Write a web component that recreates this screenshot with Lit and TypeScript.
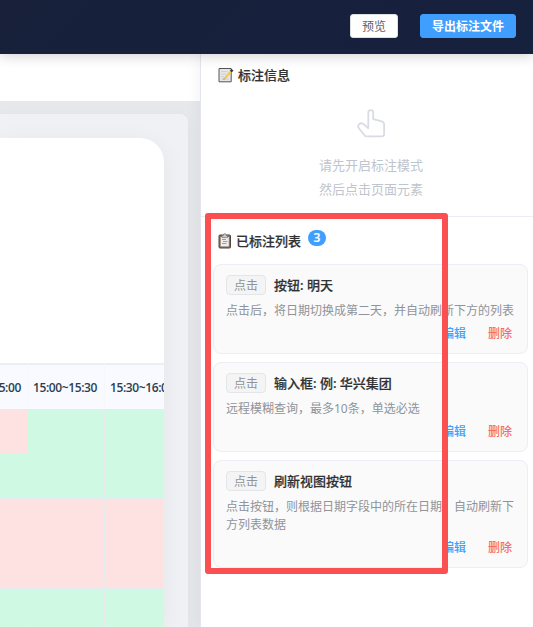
import { LitElement, html, css, svg } from "lit";
import { customElement } from "lit/decorators.js";
import { classMap } from "lit/directives/class-map.js";

interface Note {
  title: string;
  text: string;
}

const notes: Note[] = [
  { title: "按钮: 明天", text: "点击后，将日期切换成第二天，并自动刷新下方的列表" },
  { title: "输入框: 例: 华兴集团", text: "远程模糊查询，最多10条，单选必选" },
  { title: "刷新视图按钮", text: "点击按钮，则根据日期字段中的所在日期，自动刷新下方列表数据" },
];

// true marks a booked half-hour slot
const slots: boolean[][] = [
  [true, false, false],
  [false, false, false],
  [true, true, true],
  [true, true, true],
  [false, false, false],
];

const memoIcon = svg`
  <path d="M1 1.500h12.200v13.300H1z" fill="#e6e6e6" stroke="#555" stroke-width="1"/>
  <path d="M3 4.500h6.500M3 7h5M3 9.500h3M3 12h8" stroke="#cfcfcf" stroke-width=".9"/>
  <path d="M5.800 11 12 3.700l1.600 1.400-6.200 7.200z" fill="#f7c548"/>
  <path d="m5 13 .8-2 1.600 1.300z" fill="#b39a78"/>
  <path d="m11.900 3.700 1.600-1.700 2 1.500-1.600 1.800z" fill="#333"/>
`;

const clipIcon = svg`
  <rect x="1" y="2" width="11.500" height="13" rx="1" fill="#8a7464" stroke="#51443c" stroke-width="1"/>
  <path d="M2.700 4h8.100v9.400H2.700z" fill="#ededed"/>
  <path d="M4 2.400h1.300L5.900.8h1.700l.6 1.600h1.300v2.200H4z" fill="#c9c9c9" stroke="#666" stroke-width=".6"/>
  <path d="M4 6.500h4M5 8.500h4.500M4 10.500h4.500" stroke="#888" stroke-width=".8"/>
`;

const handIcon = svg`
  <path d="M368.300 128.200V112.500c0-3.200 4.900-3.200 4.900 0v6.600l8.400 2.300c1.700.5 2.500 1.400 2.500 3.100v9.700c0 1.400-.8 2.100-2.100 2.100h-15.300c-1 0-1.600-.3-2.200-1l-5.700-7.200c-1-1.200-.8-3 .6-4 1.500-1.100 3.500-.8 4.800.5z"
    fill="none" stroke="#d9dce3" stroke-width="1.800" stroke-linejoin="round"/>
`;

@customElement("app-root")
export class AppRoot extends LitElement {
  static styles = css`
    :host {
      display: flex;
      flex-direction: column;
      position: relative;
      width: 533px;
      height: 627px;
      overflow: hidden;
      background: #fff;
      color: #303133;
      font: 12px/18px "Noto Sans", "Noto Sans CJK SC", sans-serif;
    }
    * { box-sizing: border-box; }
    svg { display: block; flex: none; }
    .top {
      flex: none;
      height: 54px;
      display: flex;
      justify-content: flex-end;
      align-items: center;
      gap: 22px;
      padding: 0 17px 2px 0;
      background: linear-gradient(135deg, #18203a, #16213e);
      box-shadow: 0 2px 12px rgba(0, 0, 0, 0.18);
      position: relative;
      z-index: 2;
    }
    .btn {
      height: 24px;
      width: 48px;
      padding: 0;
      border: 1px solid #dcdfe6;
      border-radius: 3px;
      background: #fff;
      color: #606266;
      font: 12px/20px "Noto Sans CJK SC", sans-serif;
      text-align: center;
    }
    .primary {
      width: 96px;
      border-color: #409eff;
      background: #409eff;
      color: #fff;
      font-weight: 700;
    }
    .main { flex: 1; min-height: 0; display: flex; }
    .left {
      width: 200px;
      flex: none;
      display: flex;
      flex-direction: column;
      background: #e6e8eb;
    }
    .bar { flex: none; height: 47px; background: #fff; }
    .stage { flex: 1; min-height: 0; padding: 13px 12px 0 0; overflow: hidden; }
    .frame {
      height: 100%;
      padding: 24px 24px 0 0;
      border-radius: 0 8px 0 0;
      background: #eff1f5;
      box-shadow: 0 4px 20px rgba(0, 0, 0, 0.04);
      overflow: hidden;
    }
    .page {
      height: 100%;
      padding-top: 225px;
      border-radius: 0 24px 0 0;
      background: #fff;
      box-shadow: 0 4px 24px rgba(0, 0, 0, 0.05);
      overflow: hidden;
    }
    .grid {
      display: grid;
      grid-template-columns: 28px 77px 77px;
      grid-template-rows: 46px;
      grid-auto-rows: 45px;
      width: 182px;
    }
    .hour {
      display: flex;
      align-items: center;
      justify-content: center;
      padding: 1px 2px 0 0;
      border-top: 2px solid #ebeef3;
      border-right: 1px solid #f5f7fb;
      background: #f8faff;
      color: #2c3e50;
      font: 600 12px/18px "Open Sans", sans-serif;
      letter-spacing: -0.38px;
      white-space: nowrap;
    }
    .hour.cut { justify-content: flex-end; padding-right: 6px; }
    .slot {
      border-right: 1px solid #e8ebf0;
      border-bottom: 1px solid #e5ebee;
      background: #d0f9e3;
    }
    .slot.busy { background: #fee2e2; }
    .slot.open { border-bottom: 0; }
    .side {
      flex: 1;
      min-width: 0;
      border-left: 1px solid #e4e6ef;
      background: #fff;
      box-shadow: -2px 0 12px rgba(0, 0, 0, 0.05);
      position: relative;
    }
    .info { height: 163px; border-bottom: 1px solid #ebeef5; padding: 11px 0 0 17px; }
    .heading {
      display: flex;
      align-items: center;
      height: 20px;
      font: 500 13px/20px "Noto Sans CJK SC", sans-serif;
      color: #303133;
      -webkit-text-stroke: 0.2px;
    }
    .memo { margin-right: 4px; }
    .clip { margin-right: 4px; }
    .empty {
      width: 306px;
      display: flex;
      flex-direction: column;
      align-items: center;
      padding-top: 24px;
      color: #c0c4cc;
      font: 13px/24px "Noto Sans CJK SC", sans-serif;
      text-align: center;
    }
    .hand { margin-bottom: 14px; }
    .list { padding: 14px 5px 0 12px; }
    .list .heading { padding-left: 5px; margin-bottom: 13px; }
    .count {
      width: 18px;
      height: 16px;
      margin: 0 0 6px 7px;
      border-radius: 8px;
      background: #409eff;
      color: #fff;
      font: 600 12px/16px "Open Sans", sans-serif;
      text-align: center;
    }
    .cards { display: flex; flex-direction: column; gap: 8px; }
    .card {
      display: flex;
      flex-direction: column;
      padding: 10px 12px;
      border: 1px solid #ebedf7;
      border-radius: 8px;
      background: #fafafa;
    }
    .row { display: flex; align-items: center; gap: 8px; height: 20px; }
    .tag {
      width: 40px;
      height: 20px;
      border: 1px solid #e4e5e8;
      border-radius: 4px;
      background: #f4f4f5;
      color: #909399;
      font: 12px/18px "Noto Sans CJK SC", sans-serif;
      text-align: center;
    }
    .name {
      font: 500 13px/20px "Noto Sans", "Noto Sans CJK SC", sans-serif;
      -webkit-text-stroke: 0.2px;
    }
    .text {
      margin-top: 7px;
      color: #909399;
      font: 12px/18px "Noto Sans", "Noto Sans CJK SC", sans-serif;
    }
    .acts {
      display: flex;
      justify-content: flex-end;
      gap: 22px;
      height: 20px;
      margin-top: 3px;
      padding-right: 3px;
      font: 500 12px/20px "Noto Sans CJK SC", sans-serif;
    }
    .edit { color: #409eff; }
    .del { color: #f56c6c; }
    .mark {
      position: absolute;
      left: 205px;
      top: 213px;
      width: 243px;
      height: 361px;
      border: 6px solid #fb5052;
      border-radius: 3px;
      z-index: 3;
    }
  `;

  render() {
    return html`
      <header class="top">
        <button class="btn">预览</button>
        <button class="btn primary">导出标注文件</button>
      </header>
      <div class="main">
        <section class="left">
          <div class="bar"></div>
          <div class="stage">
            <div class="frame">
              <div class="page">
                <div class="grid">
                  <div class="hour cut">15:00</div>
                  <div class="hour">15:00~15:30</div>
                  <div class="hour">15:30~16:00</div>
                  ${slots.map((row, r) =>
                    row.map((busy, c) => html`<div class=${classMap({ slot: true, busy, open: r === 0 && c === 0 })}></div>`)
                  )}
                </div>
              </div>
            </div>
          </div>
        </section>
        <aside class="side">
          <section class="info">
            <div class="heading">
              <svg class="memo" width="16" height="16" viewBox="0 0 16 16">${memoIcon}</svg>标注信息
            </div>
            <div class="empty">
              <svg class="hand" width="30" height="30" viewBox="356 109 30 30">${handIcon}</svg>
              <div>请先开启标注模式</div>
              <div>然后点击页面元素</div>
            </div>
          </section>
          <section class="list">
            <div class="heading">
              <svg class="clip" width="14" height="16" viewBox="0 0 14 16">${clipIcon}</svg>已标注列表<span class="count">3</span>
            </div>
            <div class="cards">
              ${notes.map(
                (n) => html`<article class="card">
                  <div class="row"><span class="tag">点击</span><span class="name">${n.title}</span></div>
                  <div class="text">${n.text}</div>
                  <div class="acts"><span class="edit">编辑</span><span class="del">删除</span></div>
                </article>`
              )}
            </div>
          </section>
        </aside>
      </div>
      <div class="mark"></div>
    `;
  }
}
